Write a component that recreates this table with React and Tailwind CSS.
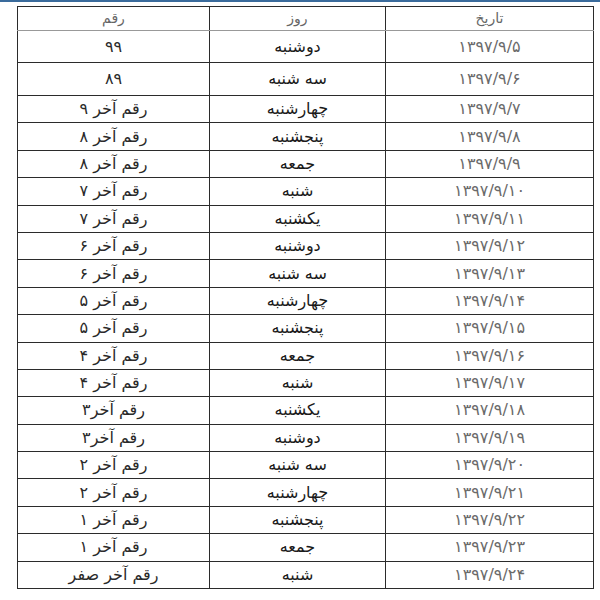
import React from "react";

const rows = [
  ["۱۳۹۷/۹/۵", "دوشنبه", "۹۹"],
  ["۱۳۹۷/۹/۶", "سه شنبه", "۸۹"],
  ["۱۳۹۷/۹/۷", "چهارشنبه", "رقم آخر ۹"],
  ["۱۳۹۷/۹/۸", "پنجشنبه", "رقم آخر ۸"],
  ["۱۳۹۷/۹/۹", "جمعه", "رقم آخر ۸"],
  ["۱۳۹۷/۹/۱۰", "شنبه", "رقم آخر ۷"],
  ["۱۳۹۷/۹/۱۱", "یکشنبه", "رقم آخر ۷"],
  ["۱۳۹۷/۹/۱۲", "دوشنبه", "رقم آخر ۶"],
  ["۱۳۹۷/۹/۱۳", "سه شنبه", "رقم آخر ۶"],
  ["۱۳۹۷/۹/۱۴", "چهارشنبه", "رقم آخر ۵"],
  ["۱۳۹۷/۹/۱۵", "پنجشنبه", "رقم آخر ۵"],
  ["۱۳۹۷/۹/۱۶", "جمعه", "رقم آخر ۴"],
  ["۱۳۹۷/۹/۱۷", "شنبه", "رقم آخر ۴"],
  ["۱۳۹۷/۹/۱۸", "یکشنبه", "رقم آخر۳"],
  ["۱۳۹۷/۹/۱۹", "دوشنبه", "رقم آخر۳"],
  ["۱۳۹۷/۹/۲۰", "سه شنبه", "رقم آخر ۲"],
  ["۱۳۹۷/۹/۲۱", "چهارشنبه", "رقم آخر ۲"],
  ["۱۳۹۷/۹/۲۲", "پنجشنبه", "رقم آخر ۱"],
  ["۱۳۹۷/۹/۲۳", "جمعه", "رقم آخر ۱"],
  ["۱۳۹۷/۹/۲۴", "شنبه", "رقم آخر صفر"],
];

const rowHeight = (i) => {
  if (i === 0) return "h-[32px]";
  if (i === 1) return "h-[33px]";
  return "h-[27.4px]";
};

export default function App() {
  return (
    <div className="w-[600px] h-[600px] bg-white font-['DejaVu_Sans',sans-serif]">
      {/* blue strip at top */}
      <div className="h-[2px] bg-[#3a6b9c]" />
      <div className="pt-[4px] pl-[17px] pr-[7px]">
        <table dir="rtl" className="w-[576px] border-collapse table-fixed border border-[#2b2b2b]">
          <colgroup>
            <col className="w-[208px]" />
            <col className="w-[176px]" />
            <col className="w-[192px]" />
          </colgroup>
          <thead>
            <tr className="h-[24px] text-[14px] text-[#666]">
              <th className="font-normal border-l border-[#2b2b2b] border-b border-b-[#999]">تاریخ</th>
              <th className="font-normal border-l border-[#2b2b2b] border-b border-b-[#999]">روز</th>
              <th className="font-normal border-b border-b-[#999]">رقم</th>
            </tr>
          </thead>
          <tbody>
            {rows.map(([date, day, num], i) => (
              <tr key={i} className={`${rowHeight(i)} text-[16px] leading-none`}>
                <td className="text-center text-[#6a6a6a] border-l border-t border-[#2b2b2b]">{date}</td>
                <td className="text-center text-[#1a1a1a] border-l border-t border-[#2b2b2b]">{day}</td>
                <td className="text-center text-[#2a2a2a] border-t border-[#2b2b2b]">{num}</td>
              </tr>
            ))}
          </tbody>
        </table>
      </div>
    </div>
  );
}
